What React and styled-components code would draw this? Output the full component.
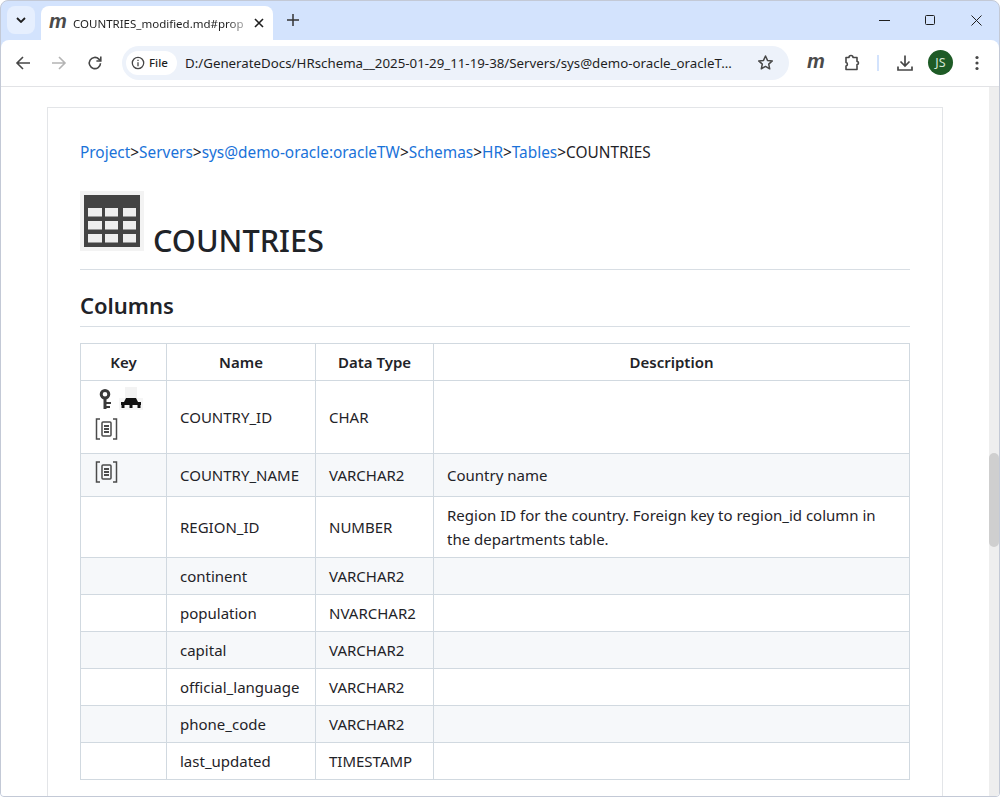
import React from 'react';
import styled, { createGlobalStyle } from 'styled-components';

const GlobalStyle = createGlobalStyle`
  html, body { margin: 0; padding: 0; background: #fff; overflow: hidden; }
  * { box-sizing: border-box; }
`;

const Window = styled.div`
  width: 1000px;
  height: 797px;
  display: flex;
  flex-direction: column;
  background: #d3e3fd;
  border: 1px solid #c3c9d6;
  border-radius: 8px 8px 4px 4px;
  overflow: hidden;
  font-family: "Noto Sans", "Open Sans", sans-serif;
`;

const TabStrip = styled.div`
  height: 39px;
  flex: none;
  display: flex;
  align-items: flex-start;
  padding: 5px 0 0 6px;
`;

const TabSearch = styled.div`
  width: 28px;
  height: 28px;
  border-radius: 8px;
  background: #e6effe;
  display: flex;
  align-items: center;
  justify-content: center;
  margin-right: 6px;
`;

const Tab = styled.div`
  width: 232px;
  height: 34px;
  background: #fff;
  border-radius: 8px 8px 0 0;
  display: flex;
  align-items: center;
  padding: 0 9px 0 8px;
`;

const Logo = styled.span`
  font-family: "Liberation Sans", sans-serif;
  font-weight: 700;
  font-style: italic;
  font-size: 20px;
  line-height: 1;
  color: #4a4a4a;
  width: 16px;
  margin-top: -4px;
  display: block;
  text-align: center;
`;

const TabTitle = styled.span`
  font-size: 11.5px;
  color: #1f1f1f;
  margin-left: 8px;
  flex: 1;
  white-space: nowrap;
  overflow: hidden;
  -webkit-mask-image: linear-gradient(to right, #000 85%, transparent 100%);
  mask-image: linear-gradient(to right, #000 85%, transparent 100%);
`;

const NewTab = styled.div`
  width: 28px;
  height: 28px;
  margin-left: 6px;
  display: flex;
  align-items: center;
  justify-content: center;
`;

const WindowControls = styled.div`
  margin-left: auto;
  display: flex;
  height: 28px;
  align-items: center;
`;

const WindowButton = styled.div`
  width: 46px;
  display: flex;
  justify-content: center;
`;

const Toolbar = styled.div`
  height: 47px;
  flex: none;
  background: #fff;
  border-radius: 8px 8px 0 0;
  border-bottom: 1px solid #e2e3e6;
  display: flex;
  align-items: center;
  padding: 0 0 1px 4px;
`;

const NavButton = styled.div`
  width: 36px;
  height: 30px;
  display: flex;
  align-items: center;
  justify-content: center;
`;

const AddressBar = styled.div`
  width: 667px;
  height: 34px;
  margin-left: 9px;
  border-radius: 17px;
  background: #edf2fa;
  display: flex;
  align-items: center;
  padding: 0 15px 0 4px;
`;

const Chip = styled.div`
  height: 24px;
  width: 51px;
  border-radius: 12px;
  background: #fff;
  display: flex;
  align-items: center;
  gap: 4px;
  padding-left: 5px;
  font-size: 11.5px;
  font-weight: 500;
  color: #1f1f1f;
`;

const Url = styled.span`
  font-size: 13.3px;
  color: #1f1f1f;
  margin-left: 8px;
  flex: 1;
  white-space: nowrap;
`;

const ToolGroup = styled.div`
  display: flex;
  align-items: center;
  margin-left: 8px;
`;

const ToolButton = styled.div`
  width: ${(p) => p.$w || 36}px;
  display: flex;
  justify-content: center;
  align-items: center;
`;

const Divider = styled.div`
  width: 2px;
  height: 16px;
  background: #d3e3fd;
  margin: 0 8px 0 6px;
`;

const Avatar = styled.div`
  width: 25px;
  height: 25px;
  border-radius: 50%;
  background: #1e5b26;
  color: #d6e6d6;
  font-size: 12.5px;
  display: flex;
  align-items: center;
  justify-content: center;
`;

const Viewport = styled.div`
  flex: 1;
  min-height: 0;
  background: #fff;
  display: flex;
  overflow: hidden;
`;

const PageArea = styled.div`
  flex: 1;
  min-width: 0;
  padding: 20px 46px 0 46px;
`;

const Article = styled.article`
  border: 1px solid #e3e5e8;
  border-bottom: none;
  height: 100%;
  padding: 32px 32px 0;
  color: #1f2328;
  font-size: 15px;
  line-height: 24px;
`;

const Crumbs = styled.div`
  height: 24px;
  padding-top: 1px;
  white-space: nowrap;
  font-size: 15.4px;
`;

const Crumb = styled.a`
  color: #1a72d9;
  text-decoration: none;
`;

const Heading = styled.h1`
  margin: 27px 0 0;
  height: 79px;
  border-bottom: 1px solid #d8dee4;
  display: flex;
  align-items: flex-end;
  font-size: 30.7px;
  font-weight: 500;
  line-height: 40px;
  color: #1f2328;
  padding-bottom: 9px;
`;

const HeadingIcon = styled.span`
  display: block;
  width: 64px;
  height: 60px;
  margin-right: 9px;
  align-self: flex-start;
`;

const SubHeading = styled.h2`
  margin: 17px 0 16px;
  height: 40px;
  border-bottom: 1px solid #d8dee4;
  font-size: 22px;
  font-weight: 600;
  line-height: 36px;
`;

const Table = styled.table`
  width: 830px;
  border-collapse: collapse;
  table-layout: fixed;
`;

const Col = styled.col`
  width: ${(p) => (p.$w ? `${p.$w}px` : 'auto')};
`;

const Head = styled.th`
  border: 1px solid #d1d9e0;
  height: 37px;
  padding: 0 13px;
  font-weight: 600;
  text-align: center;
  font-size: 15px;
`;

const Row = styled.tr`
  background: ${(p) => (p.$alt ? '#f6f8fa' : '#fff')};
  height: ${(p) => p.$h || 37}px;
`;

const Cell = styled.td`
  border: 1px solid #d1d9e0;
  padding: 5px 13px;
  vertical-align: middle;
`;

const KeyCell = styled(Cell)`
  vertical-align: top;
  padding: 4px 13px 0;
  line-height: 0;
`;

const IconLine = styled.div`
  display: flex;
  align-items: flex-end;
  height: ${(p) => p.$h || 24}px;
  gap: ${(p) => p.$gap || 0}px;
  padding-left: ${(p) => p.$indent || 0}px;
`;

const Scrollbar = styled.div`
  width: 10px;
  flex: none;
  background: #eeeeee;
  padding-top: 366px;
`;

const ScrollThumb = styled.div`
  height: 94px;
  background: #cfcfcf;
  border-radius: 5px;
`;

const stroke = { fill: 'none', stroke: '#474747', strokeWidth: 1.6 };

const Back = ({ color = '#474747' }) => (
  <svg width="16" height="16" viewBox="0 0 16 16" {...stroke} stroke={color}>
    <path d="M15 8H2M8 2L2 8l6 6" />
  </svg>
);

const Forward = ({ color = '#b4b4b4' }) => (
  <svg width="16" height="16" viewBox="0 0 16 16" {...stroke} stroke={color}>
    <path d="M1 8h13M8 2l6 6-6 6" />
  </svg>
);

const Reload = () => (
  <svg width="16" height="16" viewBox="0 0 16 16" {...stroke}>
    <path d="M13.5 8.2a5.6 5.6 0 1 1-1.6-4.1l1.7 1.7" />
    <path d="M13.8 1.6v4.4H9.4" />
  </svg>
);

const Info = () => (
  <svg width="14" height="14" viewBox="0 0 14 14" fill="none" stroke="#474747" strokeWidth="1.3">
    <circle cx="7" cy="7" r="5.7" />
    <path d="M7 6.2v4" />
    <path d="M7 3.8v1.3" />
  </svg>
);

const Star = () => (
  <svg width="17" height="17" viewBox="0 0 17 17" fill="none" stroke="#474747" strokeWidth="1.5" strokeLinejoin="round">
    <path d="M8.5 2l2 4.4 4.8.5-3.6 3.2 1 4.7-4.2-2.4-4.2 2.4 1-4.7L1.7 6.9l4.8-.5z" />
  </svg>
);

const Puzzle = () => (
  <svg width="18" height="18" viewBox="0 0 18 18" fill="none" stroke="#474747" strokeWidth="1.6" strokeLinejoin="round">
    <path d="M3 3.5h3a2 2 0 0 1 4 0h4v4a1.500 1.500 0 0 1 0 3v5H3v-3.500a1.800 1.800 0 0 0 0-3.500z" />
  </svg>
);

const Download = () => (
  <svg width="18" height="18" viewBox="0 0 18 18" fill="none" stroke="#474747" strokeWidth="1.7">
    <path d="M9 1.500v10M4.500 7.500L9 12l4.500-4.500M2 12.500v3.500h14v-3.500" />
  </svg>
);

const Dots = () => (
  <svg width="4" height="16" viewBox="0 0 4 16" fill="#474747">
    <circle cx="2" cy="2.500" r="1.600" />
    <circle cx="2" cy="8" r="1.600" />
    <circle cx="2" cy="13.500" r="1.600" />
  </svg>
);

const TableIcon = () => (
  <svg width="64" height="60" viewBox="0 0 64 60">
    <rect width="64" height="60" fill="#f3f3f3" />
    <rect x="4" y="4" width="56" height="52" fill="#444" />
    {[17, 30, 43].map((y) =>
      [8, 25, 43].map((x) => (
        <rect key={`${x}-${y}`} x={x} y={y} width={x === 8 ? 14 : 13} height="8.500" fill="#eeeeee" />
      ))
    )}
  </svg>
);

const KeyIcon = () => (
  <svg width="14" height="21" viewBox="0 0 14 21">
    <circle cx="6" cy="5.300" r="3.800" fill="none" stroke="#3a3a3a" strokeWidth="3" />
    <path d="M6 10v10" fill="none" stroke="#3a3a3a" strokeWidth="3" />
    <path d="M7 14h5M7 18h4" fill="none" stroke="#3a3a3a" strokeWidth="1.800" />
  </svg>
);

const IndexIcon = () => (
  <svg width="24" height="23" viewBox="0 0 24 23">
    <rect x="6" y="0" width="12" height="11" fill="#f3f3f3" />
    <rect y="11" width="24" height="12" fill="#f6f6f6" />
    <path d="M7 11h10l2 4H5z" fill="#111" />
    <rect x="2" y="15" width="20" height="3" fill="#111" />
    <rect x="2.500" y="18" width="3" height="3" fill="#111" />
    <rect x="10.500" y="18" width="3" height="3" fill="#111" />
    <rect x="18.500" y="18" width="3" height="3" fill="#111" />
  </svg>
);

const ColumnIcon = () => (
  <svg width="24" height="22" viewBox="0 0 24 22" fill="none" stroke="#4b4b4b">
    <path d="M6 1H2.500v20H6M19 1h3.500v20H19" strokeWidth="1.500" />
    <rect x="8" y="4" width="9" height="14" rx="1" strokeWidth="1.500" />
    <path d="M10 8h5M10 11h5M10 14h5" strokeWidth="1.800" />
  </svg>
);

const crumbs = ['Project', 'Servers', 'sys@demo-oracle:oracleTW', 'Schemas', 'HR', 'Tables'];

const columns = [
  { name: 'COUNTRY_ID', type: 'CHAR', desc: '', h: 73, icons: 'both' },
  { name: 'COUNTRY_NAME', type: 'VARCHAR2', desc: 'Country name', h: 43, icons: 'column' },
  {
    name: 'REGION_ID',
    type: 'NUMBER',
    desc: 'Region ID for the country. Foreign key to region_id column in the departments table.',
    h: 61,
  },
  { name: 'continent', type: 'VARCHAR2', desc: '' },
  { name: 'population', type: 'NVARCHAR2', desc: '' },
  { name: 'capital', type: 'VARCHAR2', desc: '' },
  { name: 'official_language', type: 'VARCHAR2', desc: '' },
  { name: 'phone_code', type: 'VARCHAR2', desc: '' },
  { name: 'last_updated', type: 'TIMESTAMP', desc: '' },
];

export default function App() {
  return (
    <Window>
      <GlobalStyle />
      <TabStrip>
        <TabSearch>
          <svg width="10" height="6" viewBox="0 0 10 6" fill="none" stroke="#1f1f1f" strokeWidth="1.800">
            <path d="M1 1l4 4 4-4" />
          </svg>
        </TabSearch>
        <Tab>
          <Logo>m</Logo>
          <TabTitle>COUNTRIES_modified.md#prop</TabTitle>
          <svg width="10" height="10" viewBox="0 0 10 10" stroke="#1f1f1f" strokeWidth="1.600">
            <path d="M1 1l8 8M9 1l-8 8" />
          </svg>
        </Tab>
        <NewTab>
          <svg width="12" height="12" viewBox="0 0 12 12" stroke="#333" strokeWidth="1.500">
            <path d="M6 0v12M0 6h12" />
          </svg>
        </NewTab>
        <WindowControls>
          <WindowButton>
            <svg width="11" height="11" viewBox="0 0 11 11" stroke="#1f1f1f"><path d="M0 5.500h11" /></svg>
          </WindowButton>
          <WindowButton>
            <svg width="11" height="11" viewBox="0 0 11 11" fill="none" stroke="#1f1f1f"><rect x=".5" y=".5" width="9" height="9" rx="1" /></svg>
          </WindowButton>
          <WindowButton>
            <svg width="11" height="11" viewBox="0 0 11 11" stroke="#1f1f1f"><path d="M.5.500l10 10M10.500.500l-10 10" /></svg>
          </WindowButton>
        </WindowControls>
      </TabStrip>
      <Toolbar>
        <NavButton><Back /></NavButton>
        <NavButton><Forward /></NavButton>
        <NavButton><Reload /></NavButton>
        <AddressBar>
          <Chip><Info />File</Chip>
          <Url>D:/GenerateDocs/HRschema__2025-01-29_11-19-38/Servers/sys@demo-oracle_oracleT...</Url>
          <Star />
        </AddressBar>
        <ToolGroup>
          <ToolButton><Logo>m</Logo></ToolButton>
          <ToolButton $w={38}><Puzzle /></ToolButton>
          <Divider />
          <ToolButton><Download /></ToolButton>
          <ToolButton $w={35}><Avatar>JS</Avatar></ToolButton>
          <ToolButton $w={38}><Dots /></ToolButton>
        </ToolGroup>
      </Toolbar>
      <Viewport>
        <PageArea>
          <Article>
            <Crumbs>
              {crumbs.map((c) => (
                <React.Fragment key={c}>
                  <Crumb href="#">{c}</Crumb>&gt;
                </React.Fragment>
              ))}
              COUNTRIES
            </Crumbs>
            <Heading>
              <HeadingIcon><TableIcon /></HeadingIcon>
              COUNTRIES
            </Heading>
            <SubHeading>Columns</SubHeading>
            <Table>
              <colgroup>
                <Col $w={86} />
                <Col $w={149} />
                <Col $w={118} />
                <Col />
              </colgroup>
              <thead>
                <tr>
                  <Head>Key</Head>
                  <Head>Name</Head>
                  <Head>Data Type</Head>
                  <Head>Description</Head>
                </tr>
              </thead>
              <tbody>
                {columns.map((c, i) => (
                  <Row key={c.name} $alt={i % 2 === 1} $h={c.h}>
                    {c.icons ? (
                      <KeyCell>
                        {c.icons === 'both' && (
                          <IconLine $h={25} $gap={6} $indent={5}>
                            <KeyIcon />
                            <IndexIcon />
                          </IconLine>
                        )}
                        <IconLine $h={c.icons === 'both' ? 30 : 25}><ColumnIcon /></IconLine>
                      </KeyCell>
                    ) : (
                      <Cell />
                    )}
                    <Cell>{c.name}</Cell>
                    <Cell>{c.type}</Cell>
                    <Cell>{c.desc}</Cell>
                  </Row>
                ))}
              </tbody>
            </Table>
          </Article>
        </PageArea>
        <Scrollbar><ScrollThumb /></Scrollbar>
      </Viewport>
    </Window>
  );
}
